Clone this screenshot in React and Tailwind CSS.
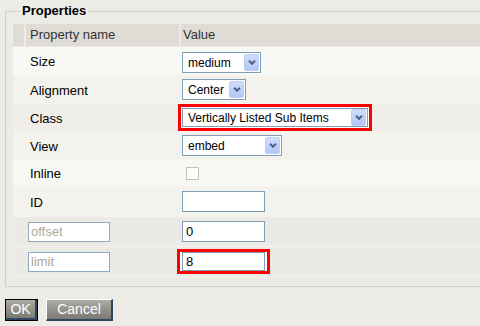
import React from 'react'

// Properties dialog (XP style)
function Arrow() {
  return (
    <div className="mr-px flex h-[17px] w-[15px] shrink-0 items-center justify-center rounded-[2px] border border-[#bccdf7] bg-linear-to-b from-[#cfdcfd] to-[#b2c7f7]">
      <svg width="8" height="5" viewBox="0 0 8 5">
        <path d="M1 0.8 L4 3.8 L7 0.8" fill="none" stroke="#4d6185" strokeWidth="2" />
      </svg>
    </div>
  )
}

function Select({ value, className }) {
  return (
    <div className={'flex items-center border border-[#7f9db9] bg-white ' + className}>
      <span className="flex-1 truncate pl-[5px] text-[12px] text-black">{value}</span>
      <Arrow />
    </div>
  )
}

function Row({ label, className, children, labelInput }) {
  return (
    <div className={'flex items-center border-b border-[#f5f4f0] ' + className}>
      <div className={'w-[169px] shrink-0 ' + (labelInput ? 'pl-[15px]' : 'pl-[17px]')}>
        {labelInput ? (
          <div className="flex h-[20px] w-[82px] items-center border border-[#8fa8c4] bg-white pl-[2px] text-[13px] text-[#aca899]">
            {label}
          </div>
        ) : (
          <span className="text-[13px] text-black">{label}</span>
        )}
      </div>
      <div className="flex items-center">{children}</div>
    </div>
  )
}

function TextBox({ value, className }) {
  return (
    <div className={'flex w-[83px] items-center border border-[#7f9db9] bg-white pl-[3px] text-[13px] text-black ' + className}>
      {value}
    </div>
  )
}

export default function App() {
  return (
    <div className="h-[326px] w-[480px] overflow-hidden bg-[#ecebe5] font-['Liberation_Sans',Arial,sans-serif]">
      <fieldset className="ml-[5px] mt-[3px] w-[520px] border border-[#d0d0c4] pb-[9px] pl-[7px] pt-[5px]">
        <legend className="ml-[7px] px-[2px] text-[13px] font-bold leading-[16px] text-black">Properties</legend>

        <div className="mb-px flex h-[22px] gap-[2px]">
          <div className="w-[11px] bg-[#dedcd4]" />
          <div className="flex w-[153px] items-center bg-[#dedcd4] pl-[4px] text-[13px] text-[#333]">Property name</div>
          <div className="flex flex-1 items-center bg-[#dedcd4] pl-[2px] text-[13px] text-[#333]">Value</div>
        </div>

        <Row label="Size" className="h-[29px] bg-[#f8f8f4]">
          <Select value="medium" className="mt-[3px] h-[21px] w-[79px]" />
        </Row>
        <Row label="Alignment" className="h-[28px] bg-[#f3f2ec]">
          <Select value="Center" className="h-[21px] w-[64px]" />
        </Row>
        <Row label="Class" className="h-[28px] bg-[#efeee8]">
          <div className="-ml-[4px] border-[3px] border-[#ff0000] bg-white p-px">
            <Select value="Vertically Listed Sub Items" className="h-[19px] w-[186px]" />
          </div>
        </Row>
        <Row label="View" className="h-[28px] bg-[#f3f2ec]">
          <Select value="embed" className="h-[21px] w-[100px]" />
        </Row>
        <Row label="Inline" className="h-[27px] bg-[#f7f7f3]">
          <div className="ml-[4px] h-[13px] w-[13px] border border-[#c5c2b2] bg-[#fdfdfb]" />
        </Row>
        <Row label="ID" className="h-[30px] bg-[#f3f2ec]">
          <TextBox value="" className="h-[21px]" />
        </Row>
        <Row label="offset" labelInput className="h-[30px] bg-[#ebeae4]">
          <TextBox value="0" className="h-[21px]" />
        </Row>
        <Row label="limit" labelInput className="h-[30px] bg-[#ebeae4]">
          <div className="-ml-[5px] border-[3px] border-[#ff0000] bg-white px-[2px]">
            <TextBox value="8" className="h-[19px]" />
          </div>
        </Row>
      </fieldset>

      <div className="ml-[5px] mt-[12px] flex gap-[8px]">
        <button className="h-[22px] w-[33px] border border-black p-0">
          <span className="flex h-full w-full items-center justify-center border-b-2 border-r-2 border-[#2f4460] bg-linear-to-b from-[#acaca4] to-[#7a7a72] text-[14px] text-white">
            OK
          </span>
        </button>
        <button className="flex h-[22px] w-[67px] items-center justify-center border-l border-t border-b-2 border-r-2 border-l-white border-t-white border-b-[#2f4460] border-r-[#2f4460] bg-linear-to-b from-[#acaca4] to-[#7a7a72] text-[14px] text-white">
          Cancel
        </button>
      </div>
    </div>
  )
}
